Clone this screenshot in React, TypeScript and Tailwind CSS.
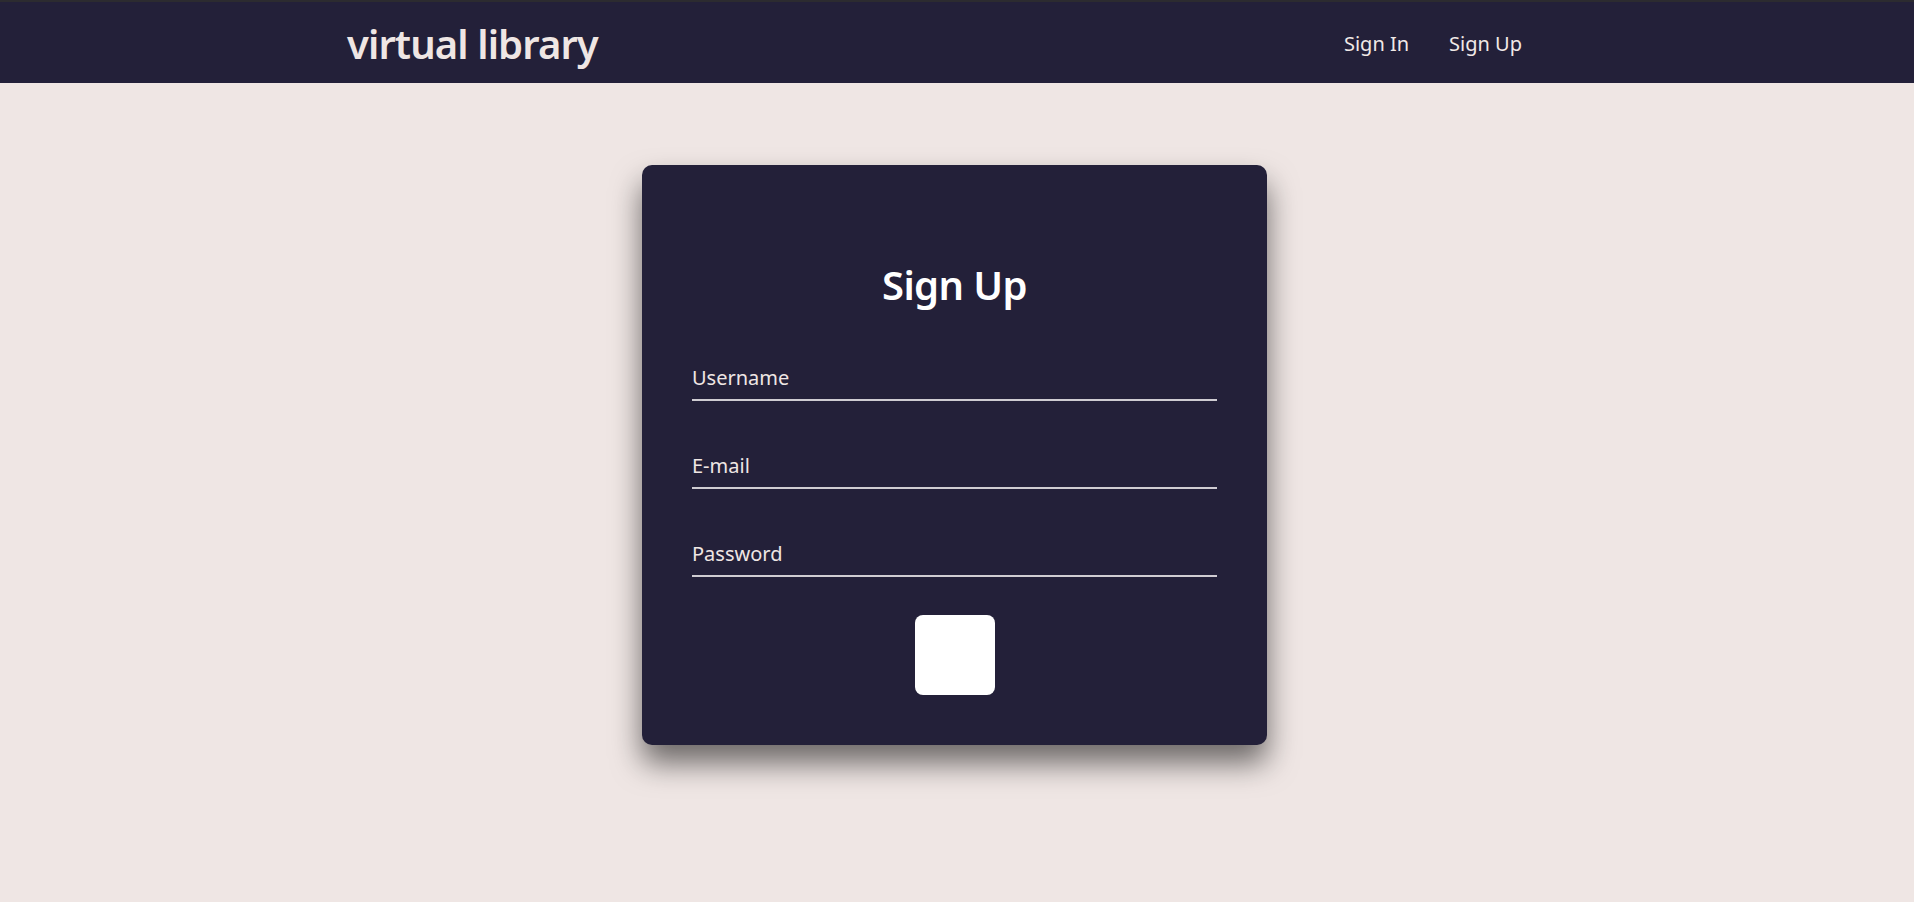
import React from "react";

export default function App() {
  const font = { fontFamily: '"Noto Sans", "Open Sans", sans-serif' };
  return (
    <div className="min-h-screen bg-[#efe6e4]" style={font}>
      <header className="h-[83px] bg-[#232039] border-t-[2px] border-[#2c2b30]">
        <div className="w-[1220px] mx-auto h-full flex items-center justify-between">
          <h1 className="mt-[3px] text-[40px] leading-[54px] font-semibold text-[#efe6e4] tracking-[-0.9px]">
            virtual library
          </h1>
          <nav className="mt-[2px] flex items-center gap-[40px] mr-[45px] text-[20px] text-[#f1e9e7]">
            <a href="#" className="leading-[27px]">Sign In</a>
            <a href="#" className="leading-[27px]">Sign Up</a>
          </nav>
        </div>
      </header>
      <main className="flex justify-center pt-[82px] pb-[100px] pr-[5px]">
        <div className="w-[625px] h-[580px] rounded-[10px] bg-[#232039] px-[50px] pt-[93px] shadow-[0_18px_30px_rgba(0,0,0,0.55)] flex flex-col">
          <h2 className="text-center text-[40px] leading-[54px] font-semibold tracking-[-0.6px] text-white">Sign Up</h2>
          <form className="mt-[52px] flex flex-col gap-[51px]" onSubmit={(e) => e.preventDefault()}>
            {["Username", "E-mail", "Password"].map((p) => (
              <div key={p} className="border-b-2 border-[#cfccd2] pb-[8px]">
                <input
                  type={p === "Password" ? "password" : "text"}
                  placeholder={p}
                  className="block w-full bg-transparent outline-none text-[20px] leading-[27px] text-[#efe6e4] placeholder:text-[#efe6e4]"
                  style={font}
                />
              </div>
            ))}
            <div className="flex justify-center -mt-[13px]">
              <button type="submit" className="w-[80px] h-[80px] rounded-[8px] bg-white"></button>
            </div>
          </form>
        </div>
      </main>
    </div>
  );
}
